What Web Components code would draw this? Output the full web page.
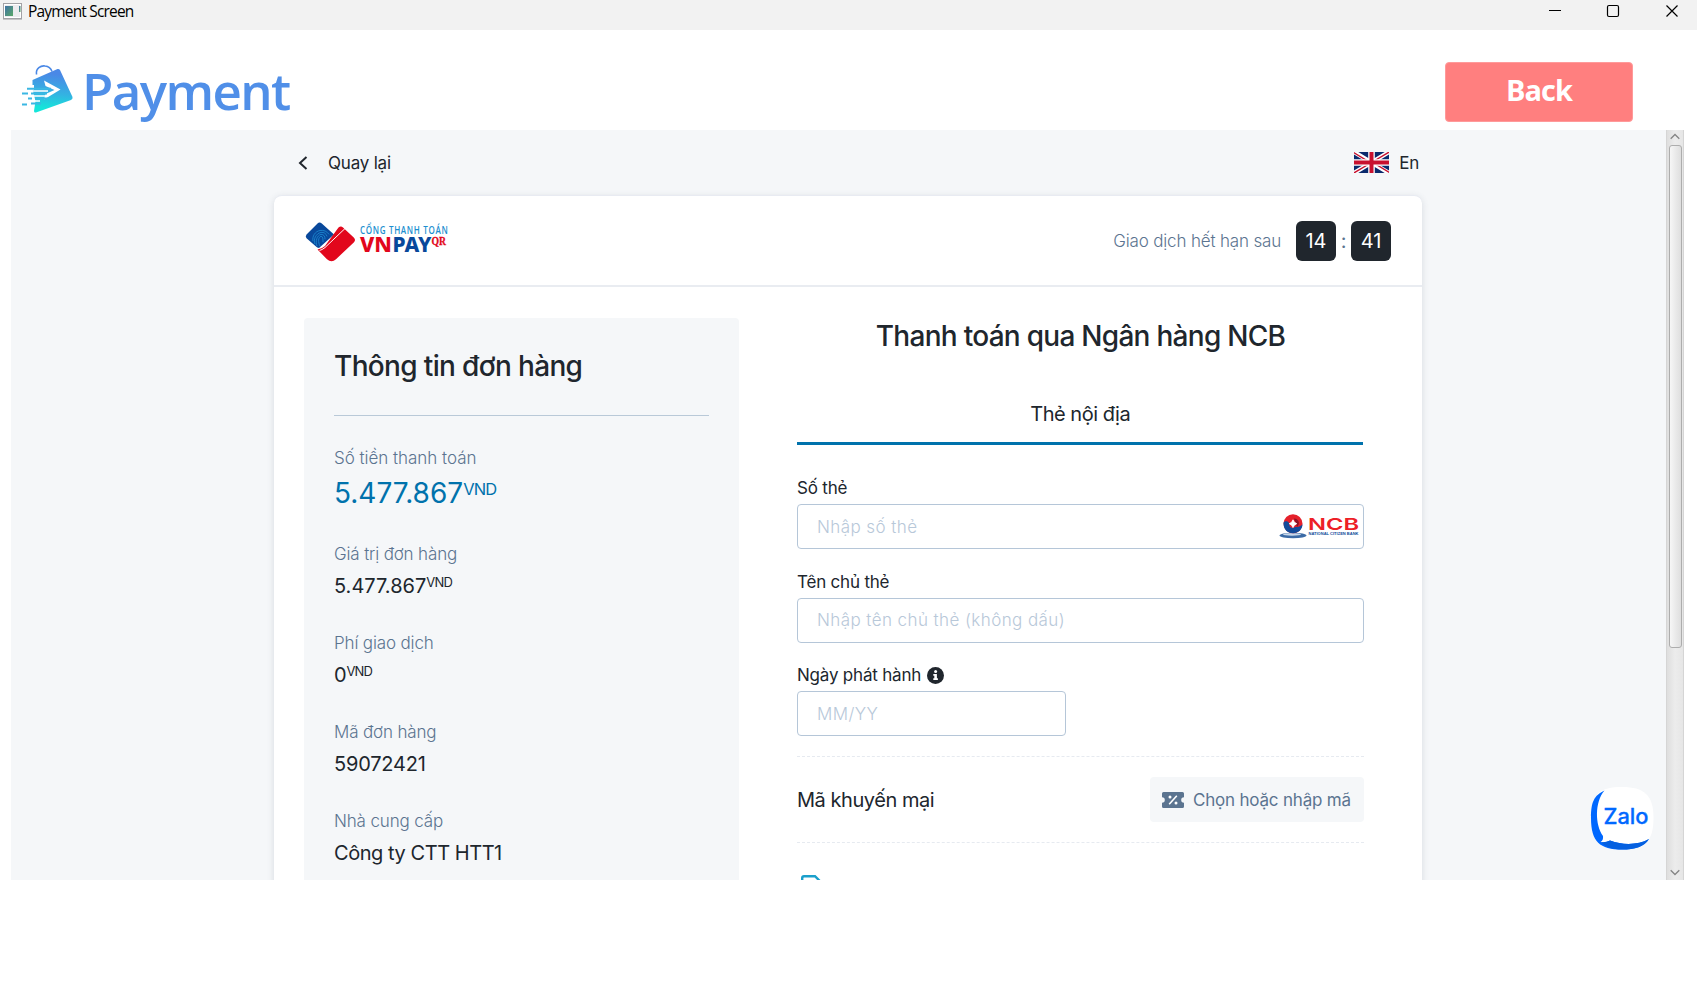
<!DOCTYPE html>
<html lang="vi">
<head>
<meta charset="utf-8">
<title>Payment Screen</title>
<style>
  html, body { margin: 0; height: 100%; background: #fff; overflow: hidden; }
  body { font-family: Inter, "Liberation Sans", sans-serif; color: #20262d; }
</style>
</head>
<body>
<app-window>
  <title-bar slot="title">Payment Screen</title-bar>
  <brand-logo slot="head">Payment</brand-logo>
  <back-button slot="head">Back</back-button>
  <pay-page slot="view"></pay-page>
  <scroll-rail slot="view"></scroll-rail>
</app-window>

<script>
const define = (name, html) => {
  const t = document.createElement('template');
  t.innerHTML = html;
  customElements.define(name, class extends HTMLElement {
    constructor() {
      super();
      this.attachShadow({ mode: 'open' }).append(t.content.cloneNode(true));
    }
    connectedCallback() {
      const input = this.shadowRoot.querySelector('input');
      if (input) input.placeholder = this.getAttribute('placeholder') || '';
    }
  });
};

define('app-window', `
<style>
  :host { display: flex; flex-direction: column; width: 1697px; height: 981px; background: #fff; }
  header { display: flex; justify-content: space-between; height: 100px; padding: 0 64px 0 21px; box-sizing: border-box; }
  main { display: flex; height: 750px; margin: 0 13px 0 11px; background: #f5f7f9; }
</style>
<slot name="title"></slot>
<header><slot name="head"></slot></header>
<main><slot name="view"></slot></main>`);

define('title-bar', `
<style>
  :host { display: flex; align-items: flex-start; height: 30px; background: #f2f2f2; color: #000;
    font: 15.500px/23px "Open Sans", "Noto Sans", sans-serif; letter-spacing: -0.820px; }
  .app { margin: 3px 6px 0 3px; }
  span { flex: 1; }
  .ctl { display: block; }
</style>
<svg class="app" width="19" height="17" viewBox="0 0 19 17">
  <defs><linearGradient id="g" x1="0" y1="0" x2="1" y2="1"><stop offset="0" stop-color="#3f72a4"/><stop offset="1" stop-color="#5aa868"/></linearGradient></defs>
  <rect x=".5" y=".5" width="18" height="15" fill="#fff" stroke="#a2a2a6"/>
  <rect x="2" y="2" width="15" height="12" fill="#ececef"/>
  <rect x="2" y="3" width="8" height="10" fill="url(#g)"/>
  <rect x="16" y="3" width="1.500" height="6" fill="url(#g)"/>
  <path d="M0 16.500h19" stroke="#c4c4c6"/>
</svg>
<span><slot></slot></span>
<svg class="ctl" width="150" height="24" viewBox="0 0 150 24" fill="none" stroke="#000">
  <path d="M2 10.500h12"/>
  <rect x="60.500" y="5.500" width="11" height="11" rx="1.500" stroke-width="1.200"/>
  <path d="M119.500 5.500l11 11m0-11l-11 11" stroke-width="1.200"/>
</svg>`);

define('brand-logo', `
<style>
  :host { display: flex; color: #508fe8; font: 600 51px/62px "Open Sans", "Noto Sans", sans-serif; letter-spacing: -1.600px; }
  svg { margin: 33px 7px 0 0; }
  span { margin-top: 29px; }
</style>
<svg width="54" height="52" viewBox="0 0 54 52">
  <defs><linearGradient id="b" x1=".4" y1="0" x2=".3" y2="1"><stop offset=".1" stop-color="#4a88e6"/><stop offset=".55" stop-color="#33b3e2"/><stop offset=".9" stop-color="#15e5da"/></linearGradient></defs>
  <path d="M15.500 11.500C14.500 5 20 2.500 24 3c4 .3 6 2.600 7 5.500" fill="none" stroke="#4a88e6" stroke-width="1.600"/>
  <path d="M11.500 17L36.500 6Q38 5.500 39 7L51.500 34Q52 36 50 37L15 49.500Q13 50 13 48L14.500 38 11.500 26z" fill="url(#b)"/>
  <path d="M23 17.500L39.500 26.500 23 36.500l1.500-5.500 9-4L24.500 23z" fill="#fff"/>
  <path d="M7 24.500h6" stroke="#fff" stroke-width="5"/>
  <path d="M6 25.700h24M1 30.500h6m3 0h16M7 35.500h4m3 0h13M1 41.500h5m4-1h10" stroke="#3bb7e3" stroke-width="1.900"/>
  <path d="M8 28h19M9 33h18M8 38h11" stroke="#fff" stroke-width="1.500"/>
</svg>
<span><slot></slot></span>`);

define('back-button', `
<style>
  :host { display: block; margin-top: 32px; width: 188px; height: 60px; box-sizing: border-box; border: 1px solid #ff9a9a;
    border-radius: 4px; background: #ff7f7f; color: #fff; text-align: center;
    font: 700 29px/54px "Open Sans", "Noto Sans", sans-serif; letter-spacing: -1px; }
</style>
<slot></slot>`);

define('scroll-rail', `
<style>
  :host { display: flex; flex-direction: column; align-items: center; width: 18px; height: 750px; box-sizing: border-box;
    border: solid #d5d5d5; border-width: 0 1px; background: linear-gradient(90deg, #dedede, #ececec 50%, #e6e6e6); }
  i { box-sizing: border-box; width: 13px; height: 503px; border: 1px solid #adadad; border-radius: 3px;
    background: linear-gradient(90deg, #f6f6f6, #dedede); }
  .up { margin-bottom: 5px; margin-top: 3px; }
  .dn { margin-top: auto; margin-bottom: 4px; }
  svg { flex: none; fill: none; stroke: #858585; stroke-width: 1.300; }
</style>
<svg class="up" width="10" height="7"><path d="M.7 5.800L5 1.500l4.300 4.300"/></svg>
<i></i>
<svg class="dn" width="10" height="7"><path d="M.7 1.200L5 5.500l4.300-4.300"/></svg>`);

define('pay-page', `
<style>
  :host { position: relative; display: block; width: 1655px; height: 750px; overflow: hidden; background: #f5f7f9; }
  .top { display: flex; justify-content: space-between; width: 1121px; margin-left: 287px; height: 65px; }
  .top div { display: flex; align-items: center; height: 66px; font-size: 17px; letter-spacing: -0.2px; }
  .card { width: 1148px; height: 800px; margin-left: 263px; box-sizing: border-box; border-top: 1px solid #e8ebf2;
    background: #fff; border-radius: 8px; box-shadow: 0 2px 7px rgba(60,75,100,.16); }
  .bar { display: flex; align-items: center; justify-content: space-between; height: 91px; padding: 1px 31px 0 31px; box-sizing: border-box; border-bottom: 2px solid #e9ecf1; }
  .cols { display: flex; }
  zalo-chat { position: absolute; left: 1579px; top: 656px; }
</style>
<div class="top">
  <div><svg width="10" height="14" viewBox="0 0 10 14" style="margin-right:20px" fill="none" stroke="#20262d" stroke-width="2"><path d="M8.500 1L2 7l6.500 6"/></svg>Quay lại</div>
  <div><uk-flag></uk-flag>En</div>
</div>
<section class="card">
  <div class="bar"><vnpay-logo></vnpay-logo><count-down><b slot="m">14</b><b slot="s">41</b>Giao dịch hết hạn sau</count-down></div>
  <div class="cols"><order-info></order-info><pay-form></pay-form></div>
</section>
<zalo-chat></zalo-chat>`);

define('uk-flag', `
<style>:host { display: block; width: 35px; height: 21px; margin: -1px 10px 0 0; } svg { display: block; }</style>
<svg width="35" height="21" viewBox="0 0 35 21">
  <defs><clipPath id="c"><path d="M0 0h35v21H0z"/></clipPath></defs>
  <g clip-path="url(#c)">
  <path d="M0 0h35v21H0z" fill="#0a2a6c"/>
  <path d="M0 0l35 21M35 0L0 21" stroke="#fff" stroke-width="4.400"/>
  <path d="M-1 .2L17.500 11.300M36 20.800L17.500 9.700M36 -.5L17.500 10.500M-1 21.500L17.500 10.500" stroke="#c8102e" stroke-width="1.400"/>
  <path d="M17.500 0v21M0 10.500h35" stroke="#fff" stroke-width="6.600"/>
  <path d="M17.500 0v21M0 10.500h35" stroke="#c8102e" stroke-width="4"/>
  </g>
</svg>`);

define('vnpay-logo', `
<style>:host { display: block; margin-top: 2px; } svg { display: block; }</style>
<svg width="145" height="42" viewBox="0 0 145 42">
  <g transform="translate(0 .7) scale(1 .975)">
  <path d="M12.500 1.800Q14.500 0 16.800 1.800L29 13 14 27Q12 27 11 25.500L1.500 17Q0 15 1.500 13z" fill="#08489b"/>
  <g fill="none" stroke="#1a80c9" stroke-width="1">
    <path d="M8 20c-1-5 2-10 7-11 4-.6 7 1 9 4M10 23c-2-5 1-11 6-12 3-.4 5 1 6 4M12 25c-2-5 0-11 4-12 3 0 4 2 4 5M15 25c-2-4-2-9 1-10 2 0 2 3 2 6"/>
  </g>
  <path d="M33.500 6Q36 4 38 6l11 10.500Q51 19 49 21L31 38.500Q26.500 42.500 22 38.500L12.500 28.500Q17 28 20 25z" fill="#e2071c"/>
  <path d="M40 7L20 26.500Q17 29 14.500 29.500" fill="none" stroke="#fff" stroke-width="1"/>
  </g>
  <text transform="translate(55 13) scale(.82 1)" font-family="'Open Sans'" font-weight="600" font-size="9.800" fill="#1c8fd0" textLength="107" lengthAdjust="spacing">CỔNG THANH TOÁN</text>
  <g font-family="'Noto Sans','Open Sans'" font-weight="800" font-size="21.500">
    <text x="55" y="31.300" fill="#e2071c" textLength="32" lengthAdjust="spacingAndGlyphs">VN</text>
    <text x="87.500" y="31.300" fill="#08489b" textLength="39" lengthAdjust="spacingAndGlyphs">PAY</text>
  </g>
  <text x="126.500" y="24.300" font-family="'Liberation Serif'" font-weight="700" font-size="12" fill="#e2071c" stroke="#e2071c" stroke-width=".3" textLength="14.500" lengthAdjust="spacingAndGlyphs">QR</text>
</svg>`);

define('count-down', `
<style>
  :host { display: flex; align-items: center; font-size: 17px; color: #5b7490; letter-spacing: -0.170px; font-weight: 300; }
  .t { margin-right: 15px; }
  ::slotted(b) { display: block; width: 40px; height: 40px; border-radius: 6px; background: #20262d; color: #fff;
    font-weight: 400; font-size: 20px; line-height: 40px; text-align: center; letter-spacing: 0; }
  i { font-style: normal; width: 15px; text-align: center; font-size: 20px; font-weight: 400; }
</style>
<span class="t"><slot></slot></span><slot name="m"></slot><i>:</i><slot name="s"></slot>`);

define('order-info', `
<style>
  :host { display: block; width: 435px; height: 800px; margin: 31px 0 0 30px; padding: 28px 30px; box-sizing: border-box; background: #f5f7f9; border-radius: 4px; flex: none; }
  h2 { margin: 0; height: 70px; box-sizing: border-box; font-size: 28px; line-height: 40px; font-weight: 450; letter-spacing: -0.650px; border-bottom: 1px solid #b9c9d8; }
  .list { display: flex; flex-direction: column; gap: 32px; padding-top: 30px; }
  .num { letter-spacing: 0; }
  .name { letter-spacing: -0.450px; }
</style>
<h2>Thông tin đơn hàng</h2>
<div class="list">
  <order-item class="total"><span slot="label">Số tiền thanh toán</span>5.477.867<span slot="unit">VND</span></order-item>
  <order-item><span slot="label">Giá trị đơn hàng</span><span class="num">5.477.867</span><span slot="unit">VND</span></order-item>
  <order-item><span slot="label">Phí giao dịch</span>0<span slot="unit">VND</span></order-item>
  <order-item><span slot="label">Mã đơn hàng</span>59072421</order-item>
  <order-item><span slot="label">Nhà cung cấp</span><span class="name">Công ty CTT HTT1</span></order-item>
</div>`);

define('order-item', `
<style>
  :host { display: block; }
  .l { font-size: 17px; line-height: 24px; color: #5b7490; font-weight: 300; letter-spacing: -0.150px; margin-bottom: 7px; }
  .v { display: flex; height: 26px; font-size: 20px; line-height: 26px; letter-spacing: -0.2px; }
  .u { font-size: 13px; line-height: 18px; letter-spacing: -0.8px; }
  :host(.total) .l { margin-bottom: 6px; letter-spacing: -0.030px; }
  :host(.total) .v { height: 34px; font-size: 28px; line-height: 34px; color: #0072ac; letter-spacing: 0; }
  :host(.total) .u { font-size: 16.500px; line-height: 26px; letter-spacing: -0.8px; }
</style>
<div class="l"><slot name="label"></slot></div>
<div class="v"><span><slot></slot></span><span class="u"><slot name="unit"></slot></span></div>`);

define('pay-form', `
<style>
  :host { display: block; width: 567px; margin-left: 58px; padding-top: 31px; flex: none; }
  h2 { margin: 0; font-size: 28px; line-height: 36px; font-weight: 450; text-align: center; letter-spacing: -0.720px; }
  .tab { margin: 46px 1px 31px -0.500px; height: 42px; line-height: 28px; font-size: 20px; text-align: center; text-indent: 1px; border-bottom: 3px solid #0072ac; letter-spacing: -0.5px; }
  .fields { display: flex; flex-direction: column; gap: 20.600px; }
  .short { width: 269px; }
  .promo { display: flex; align-items: center; justify-content: space-between; height: 85px; margin-top: 20px; border: dashed #e6eaf0; border-width: 1px 0; font-size: 20px; letter-spacing: -0.450px; }
  .doc { display: block; margin: 32px 0 0 4px; }
</style>
<h2>Thanh toán qua Ngân hàng NCB</h2>
<div class="tab">Thẻ nội địa</div>
<div class="fields">
  <form-field placeholder="Nhập số thẻ">Số thẻ<ncb-logo slot="end"></ncb-logo></form-field>
  <form-field placeholder="Nhập tên chủ thẻ (không dấu)">Tên chủ thẻ</form-field>
  <form-field class="short" placeholder="MM/YY">Ngày phát hành<info-icon slot="hint"></info-icon></form-field>
</div>
<div class="promo">Mã khuyến mại<promo-button>Chọn hoặc nhập mã</promo-button></div>
<svg class="doc" width="20" height="24" viewBox="0 0 20 24" fill="none" stroke="#1b9fcb" stroke-width="2.400"><path d="M1.200 23V3q0-1.800 1.800-1.800h11L18.800 6v17z"/></svg>`);

define('form-field', `
<style>
  :host { display: block; }
  .l { display: flex; align-items: center; font-size: 17px; line-height: 24px; height: 24px; letter-spacing: -0.2px; margin-bottom: 4px; }
  .box { display: flex; align-items: center; height: 45px; box-sizing: border-box; border: 1px solid #b5c6d8; border-radius: 4px; padding: 0 4px 0 19px; background: #fff; }
  input { flex: 1; min-width: 0; width: 100%; border: 0; outline: 0; padding: 0; background: none; font: 300 17px/24px Inter, sans-serif; letter-spacing: .42px; }
  input::placeholder { color: #b8c8d9; opacity: 1; }
</style>
<div class="l"><slot></slot><slot name="hint"></slot></div>
<div class="box"><input type="text"><slot name="end"></slot></div>`);

define('info-icon', `
<style>:host { display: block; margin-left: 5.500px; } svg { display: block; }</style>
<svg width="17" height="17" viewBox="0 0 17 17"><circle cx="8.500" cy="8.500" r="8.500" fill="#20262d"/>
<circle cx="8.600" cy="4.500" r="1.500" fill="#fff"/><path d="M6.300 7h3.600v4.300h1v1.700H6.300v-1.700h1V8.700h-1z" fill="#fff"/></svg>`);

define('ncb-logo', `
<style>:host { display: block; margin-top: -1px; } svg { display: block; }</style>
<svg width="80" height="26" viewBox="0 0 80 26">
  <ellipse cx="14" cy="22.500" rx="13.500" ry="2.800" fill="#3c6ba6"/>
  <ellipse cx="13" cy="21.400" rx="9" ry="1.300" fill="#c9d8ea"/>
  <circle cx="14" cy="10.800" r="9.500" fill="#e5202b"/>
  <path d="M4.500 9.500C4.300 16.500 8.500 20.300 14 20.300S23.500 16.300 23.500 11.300c-2 2.400-5 3.200-7 2.500C13.500 16.300 9.500 14.300 10.500 10.300 8.500 7.300 6 7.800 4.500 9.500z" fill="#124b9a"/>
  <path d="M15 5.500c5 .5 6.500 5 3 8.500l-1.500-4z" fill="#8d1326"/>
  <path d="M14 6.800Q14.800 9.800 17.800 10.700 14.800 11.600 14 14.600 13.200 11.600 10.200 10.700 13.200 9.800 14 6.800z" fill="#fff" stroke="#fff" stroke-width=".8"/>
  <text x="29" y="16.500" font-family="Inter" font-weight="600" font-size="16.500" fill="#ed2027" textLength="51" lengthAdjust="spacingAndGlyphs">NCB</text>
  <text x="29.500" y="22" font-family="'Liberation Sans'" font-weight="700" font-size="4" fill="#124b9a" textLength="50" lengthAdjust="spacingAndGlyphs">NATIONAL CITIZEN BANK</text>
</svg>`);

define('promo-button', `
<style>
  :host { display: flex; align-items: center; box-sizing: border-box; width: 214px; height: 45px; padding-left: 12px; border-radius: 4px; background: #f5f7f9; color: #5b7490; font-size: 17px; letter-spacing: -0.2px; }
  svg { margin-right: 9px; }
</style>
<svg width="22" height="16" viewBox="0 0 22 16">
  <path d="M1.500 0h19Q22 0 22 1.500V5.200a2.800 2.800 0 0 0 0 5.600V14.500Q22 16 20.500 16h-19Q0 16 0 14.500V10.800a2.800 2.800 0 0 0 0-5.600V1.500Q0 0 1.500 0z" fill="#5b7490"/>
  <path d="M14.800 3.800l-7.600 8.400" stroke="#fff" stroke-width="1.600"/><circle cx="8" cy="5" r="1.500" fill="#fff"/><circle cx="14" cy="11" r="1.500" fill="#fff"/>
</svg>
<span><slot></slot></span>`);

define('zalo-chat', `
<style>:host { display: block; } svg { display: block; }</style>
<svg width="65" height="65" viewBox="0 0 65 65">
  <path d="M32 1C10 1 1 8 1 32s8 31.500 31 31.500S63.500 55 63.500 32 54 1 32 1z" fill="#fff"/>
  <path d="M14.500 4.500C4 9.500 1 16 1 32c0 24 9 31.500 31 31.500 13 0 22-2.500 27-10.500C49 59 33 59.500 20 54.500q-4 2.500-9.500 1.500 3-1.500 2.500-6C5 39 4.500 16 14.500 4.500z" fill="#0068ff"/>
  <path d="M11 56q4 1 9-1.500C33 59.500 48 59 59 53c-5 8-14 10.500-27 10.500-9 0-16-2-21-7.500z" fill="#0560e0"/>
  <text x="13.500" y="37.500" font-family="Inter" font-weight="500" font-size="21" fill="#0068ff" stroke="#0068ff" stroke-width=".3" textLength="45" lengthAdjust="spacingAndGlyphs">Zalo</text>
</svg>`);
</script>
</body>
</html>
